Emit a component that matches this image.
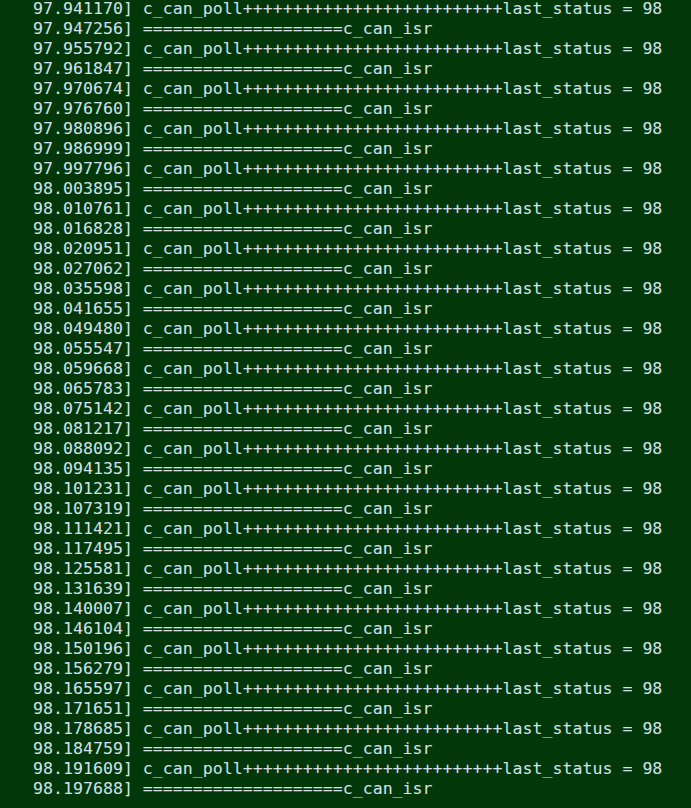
const pairs = [
  ['97.941170', '97.947256'],
  ['97.955792', '97.961847'],
  ['97.970674', '97.976760'],
  ['97.980896', '97.986999'],
  ['97.997796', '98.003895'],
  ['98.010761', '98.016828'],
  ['98.020951', '98.027062'],
  ['98.035598', '98.041655'],
  ['98.049480', '98.055547'],
  ['98.059668', '98.065783'],
  ['98.075142', '98.081217'],
  ['98.088092', '98.094135'],
  ['98.101231', '98.107319'],
  ['98.111421', '98.117495'],
  ['98.125581', '98.131639'],
  ['98.140007', '98.146104'],
  ['98.150196', '98.156279'],
  ['98.165597', '98.171651'],
  ['98.178685', '98.184759'],
  ['98.191609', '98.197688'],
]

const poll = 'c_can_poll' + '+'.repeat(26) + 'last_status = 98'
const isr = '='.repeat(20) + 'c_can_isr'

export default function App() {
  const lines: string[] = []
  pairs.forEach(([a, b]) => {
    lines.push(`   ${a}] ${poll}`)
    lines.push(`   ${b}] ${isr}`)
  })

  return (
    <div className="w-[691px] h-[808px] overflow-hidden bg-[#023809]">
      {/* dmesg output, the "[" of each line sits just off the left edge */}
      <div
        className="pl-[3px] -mt-px text-[16.6px] leading-[20px] text-[#d3e2ea] whitespace-pre"
        style={{ fontFamily: '"DejaVu Sans Mono", monospace' }}
      >
        {lines.map((l, i) => (
          <div key={i} className="h-[20px]">{l}</div>
        ))}
      </div>
    </div>
  )
}
